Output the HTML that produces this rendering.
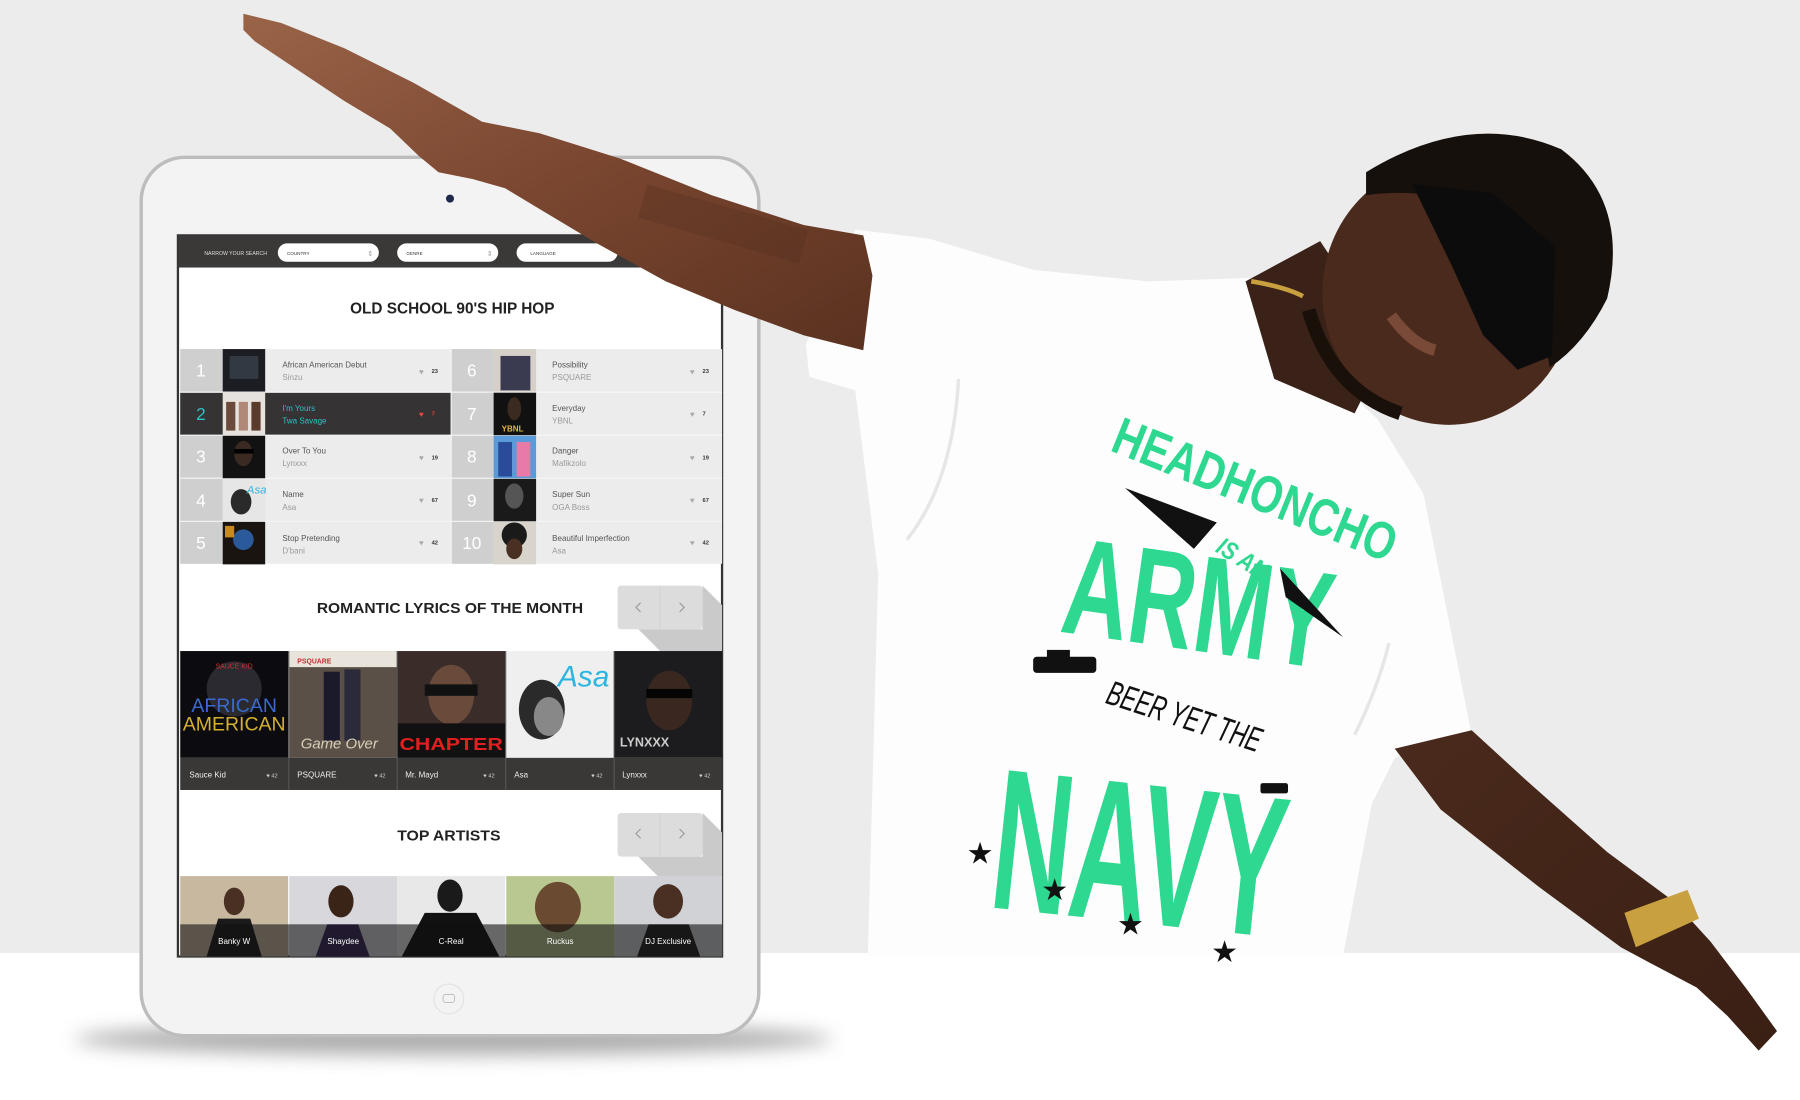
<!DOCTYPE html>
<html><head><meta charset="utf-8"><style>
html,body{margin:0;padding:0;width:1800px;height:1100px;overflow:hidden;background:#fff}
svg{display:block}
text{font-family:"Liberation Sans",sans-serif}
</style></head><body>
<svg width="1800" height="1100" viewBox="0 0 1568 958" preserveAspectRatio="none" xmlns="http://www.w3.org/2000/svg">
<defs>
<filter id="bl" x="-20%" y="-200%" width="140%" height="500%"><feGaussianBlur stdDeviation="8"/></filter>
<linearGradient id="skin" x1="0" y1="0" x2="1" y2="1"><stop offset="0" stop-color="#9a6448"/><stop offset="0.5" stop-color="#7a4630"/><stop offset="1" stop-color="#5a3220"/></linearGradient>
<linearGradient id="skin2" x1="0" y1="0" x2="1" y2="1"><stop offset="0" stop-color="#4a2a1c"/><stop offset="1" stop-color="#3a1f14"/></linearGradient>
</defs>
<rect x="0" y="0" width="1568" height="830" fill="#ececec"/>
<rect x="0" y="830" width="1568" height="128" fill="#ffffff"/>
<ellipse cx="395" cy="905" rx="330" ry="14" fill="#9a9a9a" filter="url(#bl)" opacity="0.8"/>
<rect x="123" y="137" width="538" height="765" rx="38" fill="#f3f3f4" stroke="#bdbdbd" stroke-width="3"/>
<circle cx="392" cy="173" r="3.5" fill="#1e2848"/>
<circle cx="391" cy="870" r="13" fill="#f3f3f4" stroke="#e2e2e2" stroke-width="1"/>
<rect x="386" y="866" width="10" height="7" rx="2" fill="none" stroke="#bbb" stroke-width="0.8"/>
<rect x="155" y="205" width="474" height="628" fill="#fff" stroke="#333" stroke-width="2"/>
<rect x="155" y="205" width="474" height="28" fill="#3b3838"/>
<text x="178" y="222" font-size="4.5" fill="#ddd">NARROW YOUR SEARCH</text>
<rect x="242" y="212" width="88" height="16" rx="8" fill="#fff"/><text x="250" y="222" font-size="4" fill="#333">COUNTRY</text><text x="320" y="223" font-size="6" fill="#999">⇕</text>
<rect x="346" y="212" width="88" height="16" rx="8" fill="#fff"/><text x="354" y="222" font-size="4" fill="#333">GENRE</text><text x="424" y="223" font-size="6" fill="#999">⇕</text>
<rect x="450" y="212" width="88" height="16" rx="8" fill="#fff"/><text x="462" y="222" font-size="4" fill="#333">LANGUAGE</text>
<text x="394" y="273" font-size="14" font-weight="bold" fill="#222" text-anchor="middle" textLength="178" lengthAdjust="spacingAndGlyphs">OLD SCHOOL 90'S HIP HOP</text>
<rect x="157" y="304" width="472" height="187" fill="#ececec"/>
<g>
<rect x="157" y="304" width="37" height="187" fill="#cfcfcf"/>
<rect x="393" y="304" width="37" height="187" fill="#cfcfcf"/>
<rect x="157" y="342" width="236" height="37" fill="#353333"/>
<g stroke="#f6f6f6" stroke-width="1">
<line x1="157" y1="341.5" x2="629" y2="341.5"/><line x1="157" y1="379" x2="629" y2="379"/><line x1="157" y1="416.5" x2="629" y2="416.5"/><line x1="157" y1="454" x2="629" y2="454"/>
<line x1="393" y1="304" x2="393" y2="491"/>
</g>
<rect x="194" y="304" width="37" height="37" fill="#1b1d22"/><rect x="200" y="310" width="25" height="20" fill="#3d4650" opacity=".7"/>
<rect x="194" y="342" width="37" height="37" fill="#e8e2dc"/><rect x="197" y="350" width="8" height="25" fill="#6a4a3a"/><rect x="208" y="350" width="8" height="25" fill="#b08878"/><rect x="219" y="350" width="8" height="25" fill="#5a3a2a"/>
<rect x="194" y="379.5" width="37" height="37" fill="#121212"/><ellipse cx="212" cy="395" rx="8" ry="11" fill="#3a2a22"/><rect x="204" y="391" width="17" height="4" fill="#000"/>
<rect x="194" y="417" width="37" height="37" fill="#e6e6e6"/><ellipse cx="210" cy="437" rx="9" ry="11" fill="#2a2a2a"/><text x="215" y="430" font-size="10" fill="#2bb5e0" font-style="italic">Asa</text>
<rect x="194" y="454.5" width="37" height="37" fill="#1a1410"/><circle cx="212" cy="470" r="9" fill="#2a5a9a"/><rect x="196" y="458" width="8" height="10" fill="#c88a20"/>
<rect x="430" y="304" width="37" height="37" fill="#d6d0c8"/><rect x="436" y="310" width="26" height="30" fill="#3a3a50"/>
<rect x="430" y="342" width="37" height="37" fill="#111"/><ellipse cx="448" cy="356" rx="6" ry="10" fill="#3a2a20"/><text x="437" y="376" font-size="7" font-weight="bold" fill="#e2b840">YBNL</text>
<rect x="430" y="379.5" width="37" height="37" fill="#5a9ad8"/><rect x="434" y="385" width="12" height="30" fill="#2a4a9a"/><rect x="450" y="385" width="12" height="30" fill="#e87aa8"/>
<rect x="430" y="417" width="37" height="37" fill="#1a1a1a"/><ellipse cx="448" cy="432" rx="8" ry="11" fill="#555"/>
<rect x="430" y="454.5" width="37" height="37" fill="#d8d4cc"/><circle cx="448" cy="466" r="11" fill="#1a1a1a"/><ellipse cx="448" cy="478" rx="7" ry="9" fill="#4a3022"/>
<g font-size="15" fill="#fff" text-anchor="middle">
<text x="175" y="328">1</text><text x="175" y="366" fill="#2bc3c8">2</text><text x="175" y="403">3</text><text x="175" y="441">4</text><text x="175" y="478">5</text>
<text x="411" y="328">6</text><text x="411" y="366">7</text><text x="411" y="403">8</text><text x="411" y="441">9</text><text x="411" y="478">10</text>
</g>
<g font-size="7" fill="#555">
<text x="246" y="320">African American Debut</text><text x="246" y="331" fill="#999">Sinzu</text>
<text x="246" y="358" fill="#2bc3c8">I'm Yours</text><text x="246" y="369" fill="#2bc3c8">Twa Savage</text>
<text x="246" y="395">Over To You</text><text x="246" y="406" fill="#999">Lynxxx</text>
<text x="246" y="433">Name</text><text x="246" y="444" fill="#999">Asa</text>
<text x="246" y="471">Stop Pretending</text><text x="246" y="482" fill="#999">D'bani</text>
<text x="481" y="320">Possibility</text><text x="481" y="331" fill="#999">PSQUARE</text>
<text x="481" y="358">Everyday</text><text x="481" y="369" fill="#999">YBNL</text>
<text x="481" y="395">Danger</text><text x="481" y="406" fill="#999">Mafikzolo</text>
<text x="481" y="433">Super Sun</text><text x="481" y="444" fill="#999">OGA Boss</text>
<text x="481" y="471">Beautiful Imperfection</text><text x="481" y="482" fill="#999">Asa</text>
</g>
<g font-size="7" fill="#aaa" font-family="DejaVu Sans">
<text x="365" y="326">♥</text><text x="365" y="363" fill="#e84848">♥</text><text x="365" y="401">♥</text><text x="365" y="438">♥</text><text x="365" y="475">♥</text>
<text x="601" y="326">♥</text><text x="601" y="363">♥</text><text x="601" y="401">♥</text><text x="601" y="438">♥</text><text x="601" y="475">♥</text>
</g>
<g font-size="5" font-weight="bold" fill="#333">
<text x="376" y="325">23</text><text x="376" y="362" fill="#e84848">7</text><text x="376" y="400">19</text><text x="376" y="437">67</text><text x="376" y="474">42</text>
<text x="612" y="325">23</text><text x="612" y="362">7</text><text x="612" y="400">19</text><text x="612" y="437">67</text><text x="612" y="474">42</text>
</g>
</g>
<text x="392" y="534" font-size="13" font-weight="bold" fill="#222" text-anchor="middle" textLength="232" lengthAdjust="spacingAndGlyphs">ROMANTIC LYRICS OF THE MONTH</text>
<polygon points="556,548 612,548 612,510 629,527 629,567 575,567" fill="#cacaca"/>
<rect x="538" y="510" width="74" height="38" rx="3" fill="#dcdcdc"/>
<line x1="575" y1="510" x2="575" y2="548" stroke="#d2d2d2"/>
<path d="M558 525 l-4 4 l4 4 M592 525 l4 4 l-4 4" stroke="#9a9a9a" stroke-width="1" fill="none"/>
<g>
<rect x="157" y="567" width="94" height="93" fill="#0c0c10"/><circle cx="204" cy="600" r="24" fill="#2a2a30"/>
<text x="204" y="620" font-size="17" fill="#3a6ad0" text-anchor="middle">AFRICAN</text><text x="204" y="636" font-size="17" fill="#d4b030" text-anchor="middle">AMERICAN</text><text x="204" y="582" font-size="6" fill="#d03030" text-anchor="middle">SAUCE KID</text>
<rect x="252" y="567" width="94" height="93" fill="#5a5048"/><rect x="252" y="567" width="94" height="14" fill="#e8e4dc"/><text x="259" y="578" font-size="6" font-weight="bold" fill="#c03030">PSQUARE</text><rect x="282" y="585" width="14" height="60" fill="#1a1a2a"/><rect x="300" y="583" width="14" height="62" fill="#2a2a3a"/><text x="262" y="652" font-size="13" font-style="italic" fill="#d8d0b8">Game Over</text>
<rect x="346" y="567" width="94" height="93" fill="#3a2c28"/><ellipse cx="393" cy="605" rx="20" ry="26" fill="#6a4a3a"/><rect x="370" y="596" width="46" height="10" fill="#111"/><rect x="346" y="630" width="94" height="30" fill="#111"/><text x="348" y="653" font-size="15" font-weight="bold" fill="#e02020" textLength="90" lengthAdjust="spacingAndGlyphs">CHAPTER</text>
<rect x="441" y="567" width="94" height="93" fill="#efefef"/><ellipse cx="472" cy="618" rx="20" ry="26" fill="#2a2a2a"/><ellipse cx="478" cy="624" rx="13" ry="17" fill="#888"/><text x="486" y="598" font-size="26" font-style="italic" fill="#2bb5e0">Asa</text>
<rect x="535" y="567" width="94" height="93" fill="#1c1c1e"/><ellipse cx="583" cy="610" rx="20" ry="26" fill="#3a2820"/><rect x="563" y="600" width="40" height="8" fill="#050505"/><text x="540" y="650" font-size="11" font-weight="bold" fill="#ccc">LYNXXX</text>
<rect x="157" y="660" width="472" height="28" fill="#3a3737"/>
<g stroke="#555"><line x1="251.5" y1="567" x2="251.5" y2="688"/><line x1="346" y1="567" x2="346" y2="688"/><line x1="440.5" y1="567" x2="440.5" y2="688"/><line x1="535" y1="567" x2="535" y2="688"/></g>
<g font-size="7" fill="#eee"><text x="165" y="677">Sauce Kid</text><text x="259" y="677">PSQUARE</text><text x="353" y="677">Mr. Mayd</text><text x="448" y="677">Asa</text><text x="542" y="677">Lynxxx</text></g>
<g font-size="5" fill="#ccc"><text x="232" y="677">♥ 42</text><text x="326" y="677">♥ 42</text><text x="421" y="677">♥ 42</text><text x="515" y="677">♥ 42</text><text x="609" y="677">♥ 42</text></g>
</g>
<text x="391" y="732" font-size="13" font-weight="bold" fill="#222" text-anchor="middle" textLength="90" lengthAdjust="spacingAndGlyphs">TOP ARTISTS</text>
<polygon points="556,746 612,746 612,708 629,725 629,765 575,765" fill="#cacaca"/>
<rect x="538" y="708" width="74" height="38" rx="3" fill="#dcdcdc"/>
<line x1="575" y1="708" x2="575" y2="746" stroke="#d2d2d2"/>
<path d="M558 722 l-4 4 l4 4 M592 722 l4 4 l-4 4" stroke="#9a9a9a" stroke-width="1" fill="none"/>
<g>
<rect x="157" y="763" width="94" height="70" fill="#c8b8a0"/><ellipse cx="204" cy="785" rx="9" ry="12" fill="#4a3022"/><path d="M180 833 L190 800 L218 800 L228 833Z" fill="#1a1a1a"/>
<rect x="252" y="763" width="94" height="70" fill="#d8d8dc"/><ellipse cx="297" cy="785" rx="11" ry="14" fill="#3a2418"/><path d="M275 833 L285 805 L312 805 L322 833Z" fill="#3a2a5a"/>
<rect x="346" y="763" width="94" height="70" fill="#e8e8e8"/><ellipse cx="392" cy="780" rx="11" ry="14" fill="#1a1a1a"/><path d="M350 833 L370 795 L415 795 L435 833Z" fill="#111"/>
<rect x="441" y="763" width="94" height="70" fill="#b8c890"/><ellipse cx="486" cy="790" rx="20" ry="22" fill="#6a4a30"/>
<rect x="535" y="763" width="94" height="70" fill="#d0d2d6"/><ellipse cx="582" cy="785" rx="13" ry="15" fill="#4a3022"/><path d="M555 833 L565 805 L600 805 L610 833Z" fill="#222"/>
<rect x="157" y="805" width="472" height="28" fill="#111" opacity="0.6"/>
<g font-size="7" fill="#fff" text-anchor="middle"><text x="204" y="822">Banky W</text><text x="299" y="822">Shaydee</text><text x="393" y="822">C-Real</text><text x="488" y="822">Ruckus</text><text x="582" y="822">DJ Exclusive</text></g>
</g>

<!-- MAN -->
<path d="M745,200 L810,208 L900,235 L1000,245 L1090,242 L1130,300 L1200,365 L1240,430 L1282,640 L1215,660 L1195,700 L1170,832 L756,832 L765,500 L745,340 L705,328 L702,300 L718,262 Z" fill="#fdfdfd"/>
<path d="M835,330 Q830,420 790,470 M1180,640 Q1200,600 1210,560" stroke="#e6e6e6" stroke-width="3" fill="none"/>
<path d="M1215,652 L1282,636 L1330,680 L1400,742 L1458,785 L1490,820 L1522,862 L1548,898 L1532,915 L1505,885 L1478,860 L1440,840 L1412,825 L1340,772 L1255,705 Z" fill="url(#skin2)"/>
<path d="M1415,795 L1470,775 L1480,800 L1425,825 Z" fill="#c9a040"/>
<path d="M212,12 L245,20 L300,42 L360,72 L420,106 L470,116 L540,138 L620,170 L700,196 L752,205 L760,240 L752,305 L700,292 L640,270 L580,245 L520,212 L470,182 L440,164 L412,156 L382,150 L365,136 L340,112 L300,88 L255,58 L222,36 L212,26 Z" fill="url(#skin)"/>
<path d="M560,175 Q630,195 700,215" stroke="#4a2a1c" stroke-width="30" fill="none" opacity="0.25"/>
<path d="M1085,245 L1150,210 L1210,300 L1180,360 L1110,330 Z" fill="#3a2218"/>
<path d="M1090,245 Q1120,250 1135,258" stroke="#c9a040" stroke-width="4" fill="none"/>
<ellipse cx="1262" cy="255" rx="110" ry="115" fill="#4a2a1c"/>
<path d="M1190,150 Q1280,95 1360,130 Q1420,175 1400,260 Q1380,300 1350,320 L1330,200 Q1260,160 1190,170 Z" fill="#16100c"/>
<path d="M1230,160 L1300,168 L1355,215 L1352,310 L1322,322 L1292,292 L1265,232 Z" fill="#0c0c0c"/>
<path d="M1140,270 Q1160,340 1220,360" stroke="#1a100a" stroke-width="12" fill="none"/>
<path d="M1212,275 Q1230,300 1250,305" stroke="#7a4a38" stroke-width="10" fill="none"/>
<g fill="#2fd890" font-weight="bold">
<text transform="translate(966,392) rotate(22)" font-size="46" textLength="262" lengthAdjust="spacingAndGlyphs">HEADHONCHO</text>
<text transform="translate(1058,480) rotate(32)" font-size="22" font-style="italic" textLength="48" lengthAdjust="spacingAndGlyphs">IS AN</text>
<text transform="translate(922,550) rotate(8)" font-size="120" textLength="235" lengthAdjust="spacingAndGlyphs">ARMY</text>
<text transform="translate(860,790) rotate(6)" font-size="175" textLength="255" lengthAdjust="spacingAndGlyphs">NAVY</text>
</g>
<g fill="#111">
<polygon points="980,425 1060,455 1040,478"/>
<polygon points="1115,495 1170,555 1120,520"/>
<text transform="translate(962,612) rotate(18)" font-size="30" font-style="italic" textLength="140" lengthAdjust="spacingAndGlyphs">BEER YET THE</text>
<rect x="900" y="572" width="55" height="14" rx="3"/><rect x="912" y="566" width="20" height="8"/>
<rect x="1098" y="682" width="24" height="9" rx="2"/>
<g font-family="DejaVu Sans" font-size="26"><text x="842" y="752">★</text><text x="907" y="784">★</text><text x="973" y="814">★</text><text x="1055" y="838">★</text></g>
</g>
</svg>
</body></html>
